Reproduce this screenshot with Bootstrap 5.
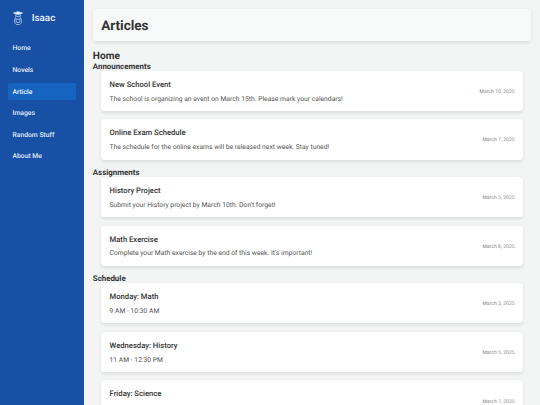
<!DOCTYPE html>
<html lang="en">
<head>
<meta charset="utf-8">
<meta name="viewport" content="width=device-width, initial-scale=1">
<title>Articles</title>
<link href="https://cdn.jsdelivr.net/npm/bootstrap@5.3.0/dist/css/bootstrap.min.css" rel="stylesheet">
<style>
html, body { height: 100%; overflow: hidden; }
body { font-family: Roboto, "Liberation Sans", sans-serif; background: #f3f5f5; color: #333; line-height: 1.2; text-rendering: geometricPrecision; }
.sidebar { width: 84.4px; background: #1850a5; padding: 8.4px; }
.brand { height: 19px; padding-left: 4.2px; margin-bottom: 12.7px; }
.brand svg { width: 10px; height: 16px; margin-right: 9.1px; }
.brand-name { font-size: 9.9px; font-weight: 500; color: #e9f2fc; padding-top: 2.4px; }
.side-links { gap: 4.95px; }
.side-links .nav-link { height: 16.6px; padding: .4px 4.2px 0; border-radius: 2.1px; font-size: 6.75px; line-height: 16.6px; font-weight: 500; color: #e3effc; }
.side-links .nav-link.active { background: #1565c0; color: #f2f8ff; }
.content { padding: 9.3px 8.6px 0 8.4px; min-width: 0; }
.page-head { height: 32px; padding: 1.4px 8.4px 0; background: #f8f9f9; border-radius: 3.4px; box-shadow: 0 1.7px 3.4px rgba(0,0,0,.09); margin-bottom: 8.4px; }
.page-head h1 { font-size: 13.5px; font-weight: 700; }
.content h2 { font-size: 10.15px; line-height: 12px; font-weight: 700; margin: 0; padding-top: 1.5px; height: 12px; }
.content h3 { font-size: 7.9px; line-height: 9.25px; font-weight: 700; margin: 0; }
.notes { padding: 0 8.4px; }
.note { height: 40.1px; margin-bottom: 8.4px; padding: 0 8.4px; background: #fff; border-radius: 3.4px; box-shadow: 0 1.7px 3.4px rgba(0,0,0,.09); }
.note-title { font-size: 7.65px; line-height: 9px; font-weight: 500; padding-top: .7px; margin-bottom: 5.8px; }
.note-text { font-size: 6.75px; line-height: 8px; color: #555; }
.note-date { font-size: 5.1px; color: #888; padding-top: 1.8px; }
.note-clipped { padding-top: 8.4px; }
.note-clipped .note-date { padding-top: 9.8px; }
</style>
<script src="https://cdn.jsdelivr.net/npm/bootstrap@5.3.0/dist/js/bootstrap.bundle.min.js"></script>
</head>
<body>
<div class="d-flex h-100">
  <aside class="sidebar flex-shrink-0 h-100">
    <div class="brand d-flex align-items-center">
      <svg viewBox="0 0 20 32" fill="none" stroke="#b9d3f0" stroke-width="1.5">
        <path d="M1 6 10 3.500 19 6 10 9Z" fill="#e8f5ff" stroke="#d5eaff"/>
        <path d="M5.500 8v5c-1 2 0 3 .5 4M14.500 8v5c1 2 0 3-.5 4M6 12q4 2.500 8 0"/>
        <path d="M5 16c-3.500 4-3 11 2 13h6c5-2 5.500-9 2-13M6 17.500q4 3 8 0v6.500q-4 3-8 0z"/>
      </svg>
      <span class="brand-name">Isaac</span>
    </div>
    <nav class="side-links nav flex-column">
      <a class="nav-link" href="#">Home</a>
      <a class="nav-link" href="#">Novels</a>
      <a class="nav-link active" href="#">Article</a>
      <a class="nav-link" href="#">Images</a>
      <a class="nav-link" href="#">Random Stuff</a>
      <a class="nav-link" href="#">About Me</a>
    </nav>
  </aside>
  <main class="content flex-grow-1">
    <header class="page-head d-flex align-items-center"><h1 class="m-0">Articles</h1></header>
    <h2>Home</h2>
    <h3>Announcements</h3>
    <div class="notes">
      <article class="note d-flex align-items-center justify-content-between">
        <div><div class="note-title">New School Event</div><div class="note-text">The school is organizing an event on March 15th. Please mark your calendars!</div></div>
        <span class="note-date">March 10, 2025</span>
      </article>
      <article class="note d-flex align-items-center justify-content-between">
        <div><div class="note-title">Online Exam Schedule</div><div class="note-text">The schedule for the online exams will be released next week. Stay tuned!</div></div>
        <span class="note-date">March 7, 2025</span>
      </article>
    </div>
    <h3>Assignments</h3>
    <div class="notes">
      <article class="note d-flex align-items-center justify-content-between">
        <div><div class="note-title">History Project</div><div class="note-text">Submit your History project by March 10th. Don't forget!</div></div>
        <span class="note-date">March 5, 2025</span>
      </article>
      <article class="note d-flex align-items-center justify-content-between">
        <div><div class="note-title">Math Exercise</div><div class="note-text">Complete your Math exercise by the end of this week. It's important!</div></div>
        <span class="note-date">March 8, 2025</span>
      </article>
    </div>
    <h3>Schedule</h3>
    <div class="notes">
      <article class="note d-flex align-items-center justify-content-between">
        <div><div class="note-title">Monday: Math</div><div class="note-text">9 AM - 10:30 AM</div></div>
        <span class="note-date">March 3, 2025</span>
      </article>
      <article class="note d-flex align-items-center justify-content-between">
        <div><div class="note-title">Wednesday: History</div><div class="note-text">11 AM - 12:30 PM</div></div>
        <span class="note-date">March 5, 2025</span>
      </article>
      <article class="note note-clipped d-flex align-items-start justify-content-between">
        <div class="note-title">Friday: Science</div>
        <span class="note-date">March 7, 2025</span>
      </article>
    </div>
  </main>
</div>
</body>
</html>
